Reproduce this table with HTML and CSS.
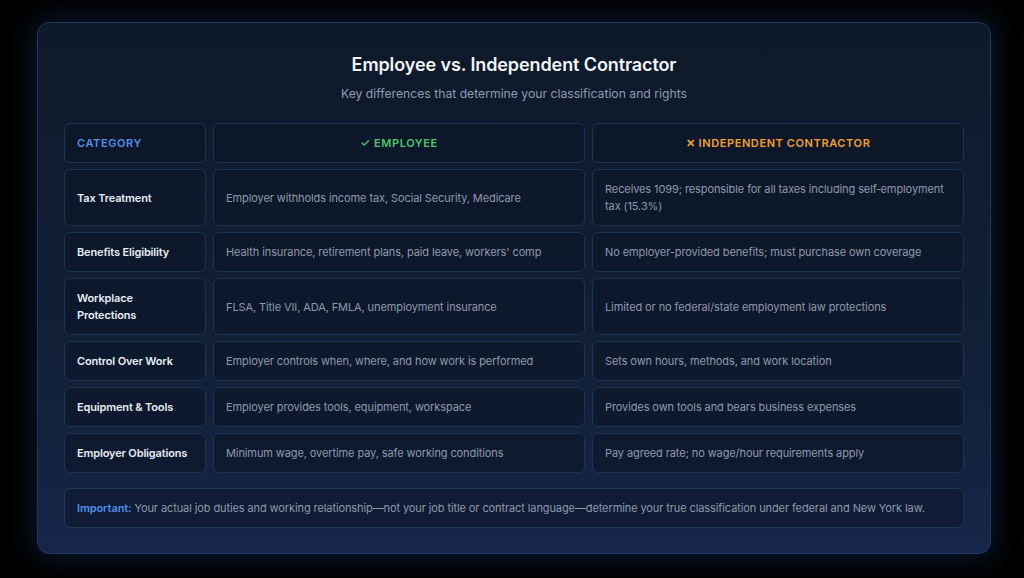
FILE: index.html
```html
<!DOCTYPE html>
<html lang="en">
<head>
<meta charset="utf-8">
<title>Employee vs. Independent Contractor</title>
<link rel="stylesheet" href="styles.css">
</head>
<body>
<div class="card">
  <h1 class="title">Employee vs. Independent Contractor</h1>
  <p class="subtitle">Key differences that determine your classification and rights</p>
  <div class="grid">
    <div class="cell head cat">CATEGORY</div>
    <div class="cell head emp">✓ EMPLOYEE</div>
    <div class="cell head con">✕ INDEPENDENT CONTRACTOR</div>

    <div class="cell label">Tax Treatment</div>
    <div class="cell">Employer withholds income tax, Social Security, Medicare</div>
    <div class="cell">Receives 1099; responsible for all taxes including self&#8209;employment tax (15.3%)</div>

    <div class="cell label">Benefits Eligibility</div>
    <div class="cell">Health insurance, retirement plans, paid leave, workers' comp</div>
    <div class="cell">No employer-provided benefits; must purchase own coverage</div>

    <div class="cell label">Workplace Protections</div>
    <div class="cell">FLSA, Title VII, ADA, FMLA, unemployment insurance</div>
    <div class="cell">Limited or no federal/state employment law protections</div>

    <div class="cell label">Control Over Work</div>
    <div class="cell">Employer controls when, where, and how work is performed</div>
    <div class="cell">Sets own hours, methods, and work location</div>

    <div class="cell label">Equipment &amp; Tools</div>
    <div class="cell">Employer provides tools, equipment, workspace</div>
    <div class="cell">Provides own tools and bears business expenses</div>

    <div class="cell label">Employer Obligations</div>
    <div class="cell">Minimum wage, overtime pay, safe working conditions</div>
    <div class="cell">Pay agreed rate; no wage/hour requirements apply</div>
  </div>
  <div class="note"><strong>Important:</strong> Your actual job duties and working relationship—not your job title or contract language—determine your true classification under federal and New York law.</div>
</div>
</body>
</html>
```

FILE: styles.css
```css
* { box-sizing: border-box; }
html, body { margin: 0; padding: 0; }
body {
  background: #000;
  font-family: Inter, "Noto Sans", "Liberation Sans", sans-serif;
  width: 1024px;
  height: 578px;
  overflow: hidden;
  padding: 22px 33px 0 37px;
}
.card {
  width: 954px;
  height: 532px;
  border: 1px solid #1f3a60;
  border-radius: 12px;
  background: linear-gradient(180deg, #0e1929 0%, #12213a 70%, #15264a 100%);
  box-shadow: 0 0 28px 4px rgba(22, 44, 84, 0.55);
  padding: 28px 26px 26px;
}
.title {
  margin: 0;
  text-align: center;
  font-size: 18px;
  line-height: 28px;
  font-weight: 600;
  color: #f1f5f9;
  letter-spacing: -0.1px;
}
.subtitle {
  margin: 7px 0 21px;
  text-align: center;
  font-size: 12.2px;
  line-height: 16px;
  color: #8f9bb0;
}
.grid {
  display: grid;
  grid-template-columns: 142px 1fr 1fr;
  column-gap: 7px;
  row-gap: 6px;
}
.cell {
  border: 1px solid #1c3354;
  border-radius: 6px;
  background: rgba(13, 22, 40, 0.65);
  padding: 11px 12px 10px;
  font-size: 11px;
  line-height: 17px;
  letter-spacing: -0.1px;
  color: #8e99ab;
  display: flex;
  align-items: center;
}
.label {
  color: #e7ecf3;
  font-weight: 600;
  padding-right: 15px;
  letter-spacing: -0.15px;
}
.head {
  font-weight: 600;
  letter-spacing: 0.6px;
  justify-content: center;
}
.head.cat { color: #4f8fe6; justify-content: flex-start; }
.head.emp { color: #4cc46a; }
.head.con { color: #f0a030; }
.note {
  margin-top: 15px;
  border: 1px solid #1f3656;
  border-radius: 6px;
  background: rgba(14, 24, 44, 0.6);
  padding: 12px 12px 11px;
  font-size: 11px;
  line-height: 15px;
  letter-spacing: -0.1px;
  color: #8e99ab;
}
.note strong { color: #4f8fe6; font-weight: 600; }
```
